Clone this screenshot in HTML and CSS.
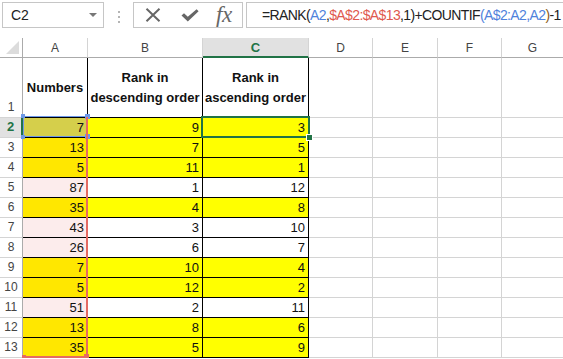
FILE: index.html
```html
<!DOCTYPE html>
<html lang="en">
<head>
    <meta charset="UTF-8">
    <meta name="viewport" content="width=device-width, initial-scale=1.0">
    <title>RANK with COUNTIF</title>
    <link rel="stylesheet" href="styles.css">
</head>
<body>

<div class="toolbar">
    <div class="name-box">
        <span>C2</span>
        <span class="caret"></span>
    </div>
    <div class="grip"><i></i><i></i><i></i></div>
    <div class="fx-buttons">
        <svg class="btn-cancel" width="16" height="14" viewBox="0 0 16 14">
            <path d="M1.5 0.8 L14.5 13.2 M14.5 0.8 L1.5 13.2" stroke="#666" stroke-width="2" fill="none"/>
        </svg>
        <svg class="btn-enter" width="18" height="13" viewBox="0 0 18 13">
            <path d="M0.5 6.5 L3 4.2 L6.8 7.8 L15.6 0.3 L17.6 2.2 L6.8 12.6 Z" fill="#666"/>
        </svg>
        <span class="btn-fx">fx</span>
    </div>
    <div class="formula">=RANK(<span class="ref-blue">A2</span>,<span class="ref-red">$A$2:$A$13</span>,1)+COUNTIF<span class="ref-blue">(A$2:A2,A2</span><span class="paren">)</span>-1</div>
</div>

<div class="sheet">
    <!-- cells are generated below -->
    <div class="mark-blue"><i class="h tl"></i><i class="h tr"></i><i class="h br"></i><i class="h bl"></i></div>
    <div class="mark-red"><i class="h bl"></i><i class="h br"></i></div>
    <div class="mark-green"><i class="fill-handle"></i></div>
</div>

<script>
    const columns = ['A', 'B', 'C', 'D', 'E', 'F', 'G'];
    const rows = [
        [7, 9, 3], [13, 7, 5], [5, 11, 1], [87, 1, 12], [35, 4, 8], [43, 3, 10],
        [26, 6, 7], [7, 10, 4], [5, 12, 2], [51, 2, 11], [13, 8, 6], [35, 5, 9]
    ];
    // numbers that appear more than once get the yellow fill
    const dup = n => rows.filter(r => r[0] === n).length > 1;

    const sheet = document.querySelector('.sheet');
    const first = sheet.firstChild;

    function addCell(text, classes) {
        const cell = document.createElement('div');
        cell.className = 'cell ' + classes;
        cell.textContent = text;
        sheet.insertBefore(cell, first);
        return cell;
    }

    function buildSheet() {
        addCell('', 'corner').innerHTML = '<span class="tri"></span>';
        columns.forEach(c => addCell(c, 'col-head' + (c === 'C' ? ' active' : '')));

        addCell('1', 'row-head');
        addCell('Numbers', 'title table');
        addCell('Rank in descending order', 'title table');
        addCell('Rank in ascending order', 'title table');
        for (let i = 0; i < 4; i++) addCell('', 'empty');

        rows.forEach((r, i) => {
            const n = i + 2;
            const on = dup(r[0]);
            addCell(n, 'row-head' + (n === 2 ? ' active' : ''));
            addCell(r[0], 'num table ' + (n === 2 ? 'a-picked' : on ? 'a-hit' : 'a-miss'));
            addCell(r[1], 'num table' + (on ? ' hit' : ''));
            addCell(r[2], 'num table' + (on ? ' hit' : ''));
            for (let k = 0; k < 4; k++) addCell('', 'empty');
        });
    }

    buildSheet();
</script>

</body>
</html>
```

FILE: styles.css
```css
body {
    margin: 0;
    font-family: "Liberation Sans", Arial, sans-serif;
    background-color: #fff;
    overflow: hidden;
}

/* formula bar */

.toolbar {
    height: 38px;
    box-sizing: border-box;
    padding: 2px 0 0 2px;
    display: flex;
    align-items: flex-start;
}

.name-box {
    width: 102px;
    height: 26px;
    box-sizing: border-box;
    border: 1px solid #c6c6c6;
    display: flex;
    align-items: center;
    justify-content: space-between;
    padding: 0 6px 0 8px;
    font-size: 14px;
    color: #222;
}

.caret {
    width: 0;
    height: 0;
    border-left: 4px solid transparent;
    border-right: 4px solid transparent;
    border-top: 4px solid #777;
}

.grip {
    display: flex;
    flex-direction: column;
    gap: 3px;
    margin: 9px 13px 0 14px;
}

.grip i {
    width: 2px;
    height: 2px;
    background-color: #b5b5b5;
}

.fx-buttons {
    width: 110px;
    height: 26px;
    box-sizing: border-box;
    border: 1px solid #c6c6c6;
    display: flex;
    align-items: center;
    padding-left: 11px;
}

.btn-enter {
    margin-left: 20px;
}

.btn-fx {
    margin-left: 17px;
    font-family: "Liberation Serif", "Times New Roman", serif;
    font-style: italic;
    font-size: 23px;
    line-height: 24px;
    color: #666;
    letter-spacing: -0.5px;
}

.formula {
    flex: 1;
    height: 26px;
    margin-left: 3px;
    box-sizing: border-box;
    border: 1px solid #c6c6c6;
    border-right: none;
    padding-left: 15px;
    font-size: 14px;
    line-height: 24px;
    color: #222;
    white-space: nowrap;
    letter-spacing: -0.62px;
}

.ref-blue {
    color: #4f82dc;
}

.ref-red {
    color: #e0594e;
}

.paren {
    color: #8c5a14;
}

/* worksheet */

.sheet {
    position: relative;
    display: grid;
    grid-template-columns: 23px 65px 115px 106px 64px 65px 64px 62px;
    grid-template-rows: 20px 60px repeat(12, 20px);
}

.cell {
    box-sizing: border-box;
    border-right: 1px solid #d4d4d4;
    border-bottom: 1px solid #d4d4d4;
    display: flex;
    align-items: flex-end;
    justify-content: flex-end;
    padding: 0 3px 2px 0;
    font-size: 13px;
    color: #111;
}

.corner {
    border-right-color: #ababab;
    border-bottom-color: #ababab;
    padding: 0 3px 3px 0;
}

.tri {
    width: 13px;
    height: 13px;
    background-color: #dcdcdc;
    clip-path: polygon(100% 0, 100% 100%, 0 100%);
}

.col-head {
    justify-content: center;
    align-items: center;
    padding: 0;
    font-size: 12px;
    color: #444;
    border-bottom-color: #ababab;
}

.col-head.active {
    background-color: #e1e1e1;
    color: #217346;
    font-weight: bold;
    font-size: 13px;
    border-bottom: 2px solid #217346;
}

.row-head {
    justify-content: center;
    padding: 0 0 3px;
    font-size: 12px;
    color: #444;
    border-right-color: #ababab;
}

.row-head.active {
    background-color: #e1e1e1;
    color: #217346;
    font-weight: bold;
    font-size: 13px;
    border-right: 2px solid #217346;
}

.table {
    border-right-color: #000;
    border-bottom-color: #000;
}

.title {
    align-items: center;
    justify-content: center;
    text-align: center;
    padding: 0;
    font-weight: bold;
    line-height: 20px;
}

.hit {
    background-color: #ffff00;
}

.a-hit {
    background-color: #ffe700;
}

.a-miss {
    background-color: #fcecec;
}

.a-picked {
    background-color: #d5cf4b;
}

/* reference and selection outlines */

.mark-blue,
.mark-red,
.mark-green {
    position: absolute;
    box-sizing: border-box;
}

.mark-blue {
    left: 23px;
    top: 78px;
    width: 65px;
    height: 21px;
    border: 1.5px solid #6d98e6;
}

.mark-red {
    left: 23px;
    top: 79px;
    width: 65px;
    height: 241px;
    border-right: 2px solid #e56a63;
    border-bottom: 2px solid #e56a63;
}

.mark-green {
    left: 201px;
    top: 78px;
    width: 109px;
    height: 22px;
    border: 2px solid #217346;
}

.h {
    position: absolute;
    width: 5px;
    height: 5px;
}

.mark-blue .h {
    background-color: #6d98e6;
}

.mark-red .h {
    background-color: #e56a63;
}

.mark-blue .tl { left: -3px; top: -3px; width: 4px; height: 4px; }
.mark-blue .tr { right: -3px; top: -3px; }
.mark-blue .br { right: -3px; bottom: -3px; }
.mark-blue .bl { left: -3px; bottom: -3px; width: 4px; height: 4px; }
.mark-red .bl { left: -1px; bottom: -3px; width: 4px; height: 4px; }
.mark-red .br { right: -3px; bottom: -3px; }

.fill-handle {
    position: absolute;
    right: -5px;
    bottom: -5px;
    width: 5px;
    height: 5px;
    background-color: #217346;
    border: 1px solid #fff;
}
```
